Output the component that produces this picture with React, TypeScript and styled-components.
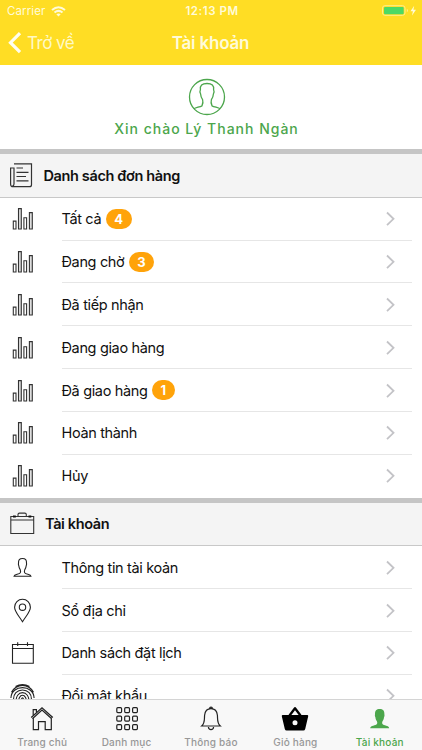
import React from "react";
import styled, { createGlobalStyle } from "styled-components";

const GlobalStyle = createGlobalStyle`
  *, *::before, *::after { box-sizing: border-box; }
  body { margin: 0; background: #fff; overflow: hidden; }
`;

const Screen = styled.div`
  width: 422px;
  height: 750px;
  display: flex;
  flex-direction: column;
  overflow: hidden;
  background: #fff;
  color: #111;
  font-family: Inter, "Liberation Sans", sans-serif;
`;

const TopBar = styled.header`
  flex: none;
  height: 65px;
  background: #ffdd24;
  color: #fffbd8;
`;

const StatusBar = styled.div`
  height: 22px;
  display: grid;
  grid-template-columns: 1fr auto 1fr;
  align-items: center;
  padding: 0 5px 0 7px;
  font-size: 11.5px;
`;

const StatusSide = styled.div<{ $end?: boolean }>`
  display: flex;
  align-items: center;
  justify-content: ${(p) => (p.$end ? "flex-end" : "flex-start")};
  gap: 6px;
  letter-spacing: 0.1px;
`;

const Clock = styled.span`
  font-weight: 600;
  font-size: 11.5px;
  letter-spacing: 0.55px;
`;

const NavBar = styled.div`
  height: 42px;
  display: grid;
  grid-template-columns: 1fr auto 1fr;
  align-items: center;
  padding: 0 8px 0 7px;
`;

const BackLink = styled.div`
  display: flex;
  align-items: center;
  gap: 5px;
  font-size: 17px;
  letter-spacing: -0.5px;
  color: #fff9c4;
`;

const Title = styled.h1`
  margin: 0;
  font-size: 17px;
  font-weight: 600;
  letter-spacing: -0.2px;
`;

const Content = styled.main`
  flex: 1;
  min-height: 0;
  overflow: hidden;
`;

const Greeting = styled.section`
  height: 84px;
  display: flex;
  flex-direction: column;
  align-items: center;
  padding: 13px 9px 0 0;
  color: #4ca64c;
`;

const GreetingText = styled.p`
  margin: 3px 0 0;
  font-size: 14px;
  line-height: 20px;
  font-weight: 500;
  letter-spacing: 1px;
  white-space: nowrap;
`;

const SectionHeader = styled.div<{ $gap: number }>`
  height: 48.8px;
  display: flex;
  align-items: center;
  gap: ${(p) => p.$gap}px;
  padding-left: 10px;
  background: #f4f4f4;
  border-top: 5px solid #c5c5c5;
  border-bottom: 1px solid #c8c8c8;
  font-size: 14.5px;
  font-weight: 600;
  letter-spacing: -0.37px;
  white-space: nowrap;
`;

const Row = styled.div`
  height: 42.83px;
  display: flex;
  align-items: stretch;
  padding-right: 10px;
`;

const RowIcon = styled.div`
  width: 61.5px;
  display: flex;
  align-items: center;
  padding-left: 10px;
`;

const RowBody = styled.div<{ $last?: boolean }>`
  flex: 1;
  display: flex;
  align-items: center;
  padding-right: 17px;
  border-bottom: 1px solid ${(p) => (p.$last ? "transparent" : "#e6e6e6")};
`;

const RowLabel = styled.span`
  font-size: 14.5px;
  letter-spacing: -0.35px;
  white-space: nowrap;
`;

const Badge = styled.span`
  margin-left: 4.5px;
  padding: 0 8.5px;
  height: 20px;
  border-radius: 10px;
  display: flex;
  align-items: center;
  justify-content: center;
  background: #ffa30a;
  color: #fff;
  font-size: 13px;
  font-weight: 700;
`;

const Spacer = styled.span`
  flex: 1;
`;

const TabBar = styled.nav`
  flex: none;
  height: 51px;
  display: grid;
  grid-template-columns: repeat(5, 1fr);
  background: #f8f8f8;
  border-top: 1px solid #d4d4d4;
`;

const Tab = styled.div<{ $active?: boolean }>`
  display: flex;
  flex-direction: column;
  align-items: center;
  padding-top: 5px;
  color: ${(p) => (p.$active ? "#4ca64c" : "#979797")};
  font-size: 10px;
  line-height: 14px;
  font-weight: 500;
  letter-spacing: 0.2px;
  white-space: nowrap;
`;

const TabIcon = styled.div`
  height: 30px;
`;

const Svg = styled.svg`
  display: block;
  flex: none;
  overflow: visible;
  fill: none;
`;

const Wifi = () => (
  <Svg width="15" height="11" viewBox="0 0 15 11">
    <g stroke="currentColor" strokeWidth="2">
      <path d="M1 4 Q7.5 -1.6 14 4" />
      <path d="M3.5 6.5 Q7.5 3.2 11.5 6.5" />
    </g>
    <path d="M5.3 8.3 Q7.5 6.7 9.7 8.3 L7.5 10.5Z" fill="currentColor" />
  </Svg>
);

const Battery = () => (
  <Svg width="35" height="12" viewBox="0 0 35 12">
    <rect x=".5" y=".7" width="22.5" height="9.6" rx="2.4" stroke="#ffef8c" />
    <rect x="2" y="2" width="19.7" height="7.2" rx="1" fill="#4cd964" />
    <path d="M24.8 4v3.2q1.2-.4 1.2-1.6t-1.2-1.6Z" fill="#ffef8c" />
    <path d="M32.2 .8 28.5 6.2h2.4l-.9 4.4 4-5.8h-2.6Z" fill="currentColor" />
  </Svg>
);

const BackChevron = () => (
  <Svg width="15" height="22" viewBox="0 0 15 22">
    <path d="M13 1.2 3.5 10.700l9.500 9.500" stroke="#fffef0" strokeWidth="3.2" />
  </Svg>
);

const Avatar = () => (
  <Svg width="38" height="38" viewBox="0 0 38 38" stroke="currentColor" strokeWidth="1.3">
    <circle cx="19" cy="19" r="17.5" />
    <path d="M5.800 30.800c2.200-1.200 5.700-1.800 8.200-3 .8-2 1.300-4.200.6-6.200-1.200-1.800-1.900-3.600-2-5.600-.9-1.500-.8-3-.2-4.200C11.800 7.600 14 5.500 19 5.500s7.200 2.100 6.600 6.300c.6 1.200.7 2.700-.2 4.200-.1 2-.8 3.800-2 5.600-.7 2-.2 4.200.6 6.200 2.500 1.200 6 1.800 8.200 3" />
  </Svg>
);

const Newspaper = () => (
  <Svg width="23" height="25" viewBox="0 0 23 25" stroke="#333" strokeWidth="1.2">
    <path d="M4 .9h17.500v20.800q0 2-2 2H3q-2.400 0-2.400-2.500V5H4v16q0 2-1.700 2" />
    <path d="M6.500 5h6.500M6.500 9.300h12M6.500 13.500h9.500M6.500 17.800h12" />
  </Svg>
);

const Briefcase = () => (
  <Svg width="25" height="23" viewBox="0 0 25 23" stroke="#333" strokeWidth="1.1">
    <path d="M.8 4.500h22.900V21.500H.8ZM.8 8h22.900M8 4.300V2.600q0-1.500 1.500-1.500h5.300q1.500 0 1.500 1.500v1.700" />
    <path d="M3 4.500h2.800M18.500 4.500h2.800" strokeWidth="2.200" stroke="#111" />
  </Svg>
);

const Bars = () => (
  <Svg width="25" height="24" viewBox="0 0 25 24" stroke="#333" strokeWidth="1.100" fill="#fff">
    <path d="M3.300 14.100h2.700v7.900h-2.700ZM13.900 10.800h2.700v11.200h-2.700Z" />
    <path d="M8.500 1.600h2.800v20.400h-2.800ZM19.400 5.600h2.900v16.400h-2.900Z" fill="#dedede" />
  </Svg>
);

const Person = () => (
  <Svg width="25" height="24" viewBox="0 0 25 24" stroke="#222" strokeWidth="1.100">
    <path d="M4 20.300c.3-2.300 5-1.600 6.300-3.500.5-1 .3-2.200-.1-3.200-.9-1.300-1.300-2.500-1.400-3.800-.5-1-.5-1.800-.3-2.600C8.300 4 9.500 2.500 12.500 2.500s4.200 1.500 4 4.700c.2.800.2 1.600-.3 2.600-.1 1.300-.5 2.500-1.400 3.800-.4 1-.6 2.200-.1 3.200 1.300 1.900 6 1.200 6.300 3.500Z" />
  </Svg>
);

const Pin = () => (
  <Svg width="25" height="24" viewBox="0 0 25 24" stroke="#222" strokeWidth="1.100">
    <path d="M12.500 22.700C9 17 4.600 12.700 4.600 8.200a7.900 7.900 0 0 1 15.800 0C20.400 12.700 16 17 12.500 22.700Z" />
    <circle cx="12.500" cy="8.200" r="3.200" />
  </Svg>
);

const Calendar = () => (
  <Svg width="25" height="24" viewBox="0 0 25 24" stroke="#222" strokeWidth="1.100">
    <path d="M2.500 3.500h20.800v18.700H2.500ZM2.500 7.500h20.800M7.700 1.200V5M17.500 1.200V5" />
  </Svg>
);

const Fingerprint = () => (
  <Svg width="25" height="24" viewBox="0 0 25 24" stroke="#222" strokeWidth="1.100">
    <path d="M5.500 2.500C10-.1 15-.1 19.500 2.500M1.500 8.300C6.800-.9 18.200-.9 23.500 8.300M.9 14C1.300.2 23.700.2 24.100 14M3.700 17C1.700 2.300 23.300 2.300 21.300 17M6.300 19C4.300 5.200 20.700 5.200 18.700 19M8.700 20C7.200 8.300 17.800 8.300 16.300 20M11.200 21C10.200 11.500 14.800 11.500 13.800 21" />
  </Svg>
);

const Disclosure = () => (
  <Svg width="9" height="15" viewBox="0 0 9 15">
    <path d="M1 1.500 7.500 7.800 1 14.100" stroke="#c3c3c7" strokeWidth="1.800" />
  </Svg>
);

const House = () => (
  <Svg width="26" height="26" viewBox="0 0 26 26" stroke="#222" strokeWidth="1.200">
    <path d="M2.200 12.500 13 2.700 23.800 12.500M4.300 12.600v12.100h5.200v-8h6.700v8h6.100V12.600M3.400 13.700 13 5.100l9.700 8.600" />
    <path d="M4.200 10.200V4.700h3.200v2.600" />
  </Svg>
);

const Grid = () => (
  <Svg width="26" height="26" viewBox="0 0 26 26" stroke="#222" strokeWidth="1.200">
    {[2.7, 11.2, 19.7].map((y) =>
      [2.8, 10.7, 18.6].map((x) => (
        <rect key={`${x}-${y}`} x={x} y={y} width="4.800" height="4.900" rx="1" />
      ))
    )}
  </Svg>
);

const Bell = () => (
  <Svg width="26" height="26" viewBox="0 0 26 26" stroke="#222" strokeWidth="1.200">
    <path d="M3.700 21c3.500-3 2.500-6.500 2.900-10.800C7 6 9.300 3.600 13 3.600s6 2.400 6.400 6.600c.4 4.300-.6 7.800 2.900 10.800ZM11.600 3.400q0-1.300 1.400-1.300t1.400 1.300M10.400 22q.2 2.600 2.600 2.600t2.600-2.600" />
  </Svg>
);

const Basket = () => (
  <Svg width="28" height="26" viewBox="0 0 28 26">
    <path d="m8.500 10.500 5.500-7.300 5.500 7.300" stroke="#000" strokeWidth="2.300" strokeLinejoin="round" />
    <path fillRule="evenodd" fill="#000" d="M1.800 10h24.400q1.200 0 1 1.200l-3 12.800q-.4 1.500-1.900 1.500H5.700q-1.500 0-1.900-1.500L.8 11.200q-.2-1.200 1-1.200ZM14 15.300a2.500 2.500 0 1 0 0 5 2.500 2.500 0 1 0 0-5Z" />
  </Svg>
);

const PersonSolid = () => (
  <Svg width="26" height="26" viewBox="0 0 26 26">
    <path fill="currentColor" d="M3.200 23.300c.2-3 5.600-2.300 6.900-4.500.3-.8.200-1.700-.2-2.600-1-1.300-1.400-2.600-1.500-4-.6-1-.6-1.900-.4-2.700C7.800 5.500 9.500 3.900 12.700 3.900s4.900 1.600 4.700 5.600c.2.800.2 1.700-.4 2.700-.1 1.400-.5 2.700-1.500 4-.4.900-.5 1.800-.2 2.600 1.300 2.200 6.700 1.500 6.900 4.500Z" />
  </Svg>
);

type Item = { label: string; count?: number; icon: React.ReactNode };

const orders: Item[] = [
  { label: "Tất cả", count: 4, icon: <Bars /> },
  { label: "Đang chờ", count: 3, icon: <Bars /> },
  { label: "Đã tiếp nhận", icon: <Bars /> },
  { label: "Đang giao hàng", icon: <Bars /> },
  { label: "Đã giao hàng", count: 1, icon: <Bars /> },
  { label: "Hoàn thành", icon: <Bars /> },
  { label: "Hủy", icon: <Bars /> },
];

const account: Item[] = [
  { label: "Thông tin tài koản", icon: <Person /> },
  { label: "Sổ địa chỉ", icon: <Pin /> },
  { label: "Danh sách đặt lịch", icon: <Calendar /> },
  { label: "Đổi mật khẩu", icon: <Fingerprint /> },
];

const tabs = [
  { label: "Trang chủ", icon: <House /> },
  { label: "Danh mục", icon: <Grid /> },
  { label: "Thông báo", icon: <Bell /> },
  { label: "Giỏ hàng", icon: <Basket /> },
  { label: "Tài khoản", icon: <PersonSolid />, active: true },
];

const List = ({ items }: { items: Item[] }) => (
  <>
    {items.map((item, i) => (
      <Row key={item.label}>
        <RowIcon>{item.icon}</RowIcon>
        <RowBody $last={i === items.length - 1}>
          <RowLabel>{item.label}</RowLabel>
          {item.count !== undefined && <Badge>{item.count}</Badge>}
          <Spacer />
          <Disclosure />
        </RowBody>
      </Row>
    ))}
  </>
);

export default function App() {
  return (
    <Screen>
      <GlobalStyle />
      <TopBar>
        <StatusBar>
          <StatusSide>
            Carrier <Wifi />
          </StatusSide>
          <Clock>12:13 PM</Clock>
          <StatusSide $end>
            <Battery />
          </StatusSide>
        </StatusBar>
        <NavBar>
          <BackLink>
            <BackChevron />
            Trở về
          </BackLink>
          <Title>Tài khoản</Title>
        </NavBar>
      </TopBar>
      <Content>
        <Greeting>
          <Avatar />
          <GreetingText>Xin chào Lý Thanh Ngàn</GreetingText>
        </Greeting>
        <SectionHeader $gap={10.5}>
          <Newspaper />
          Danh sách đơn hàng
        </SectionHeader>
        <List items={orders} />
        <SectionHeader $gap={10}>
          <Briefcase />
          Tài khoản
        </SectionHeader>
        <List items={account} />
      </Content>
      <TabBar>
        {tabs.map((tab) => (
          <Tab key={tab.label} $active={tab.active}>
            <TabIcon>{tab.icon}</TabIcon>
            {tab.label}
          </Tab>
        ))}
      </TabBar>
    </Screen>
  );
}
